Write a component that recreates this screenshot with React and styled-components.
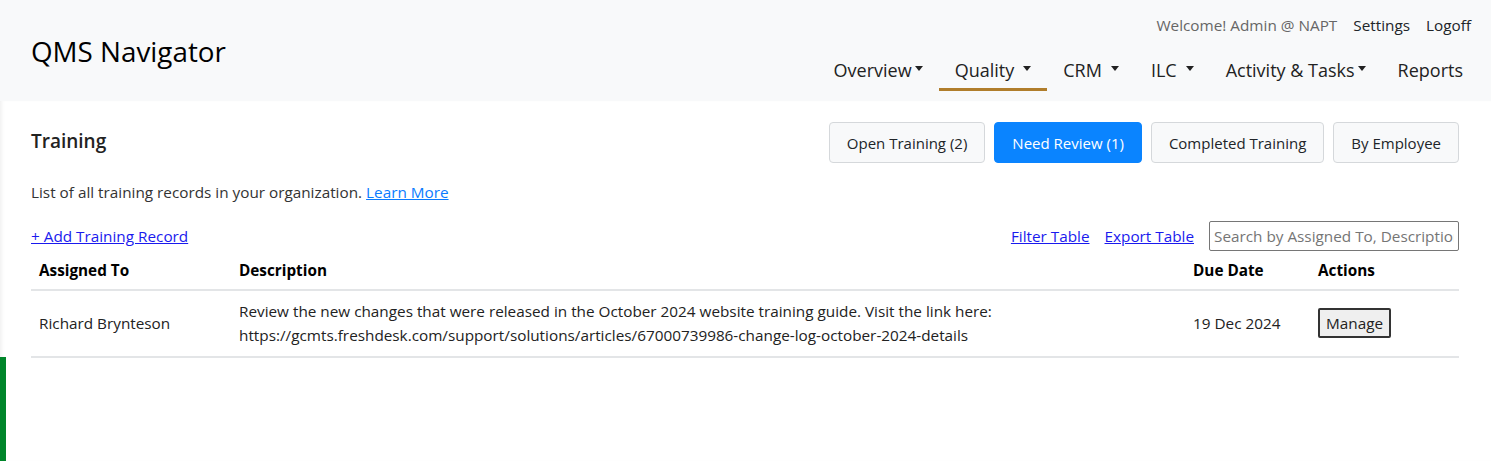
import React from 'react';
import styled, { createGlobalStyle } from 'styled-components';

const GlobalStyle = createGlobalStyle`
  body {
    margin: 0;
    font-family: 'Open Sans', 'Noto Sans', sans-serif;
    color: #212529;
    background: #fff;
  }
`;

const Header = styled.header`
  height: 101px;
  background: #f8f9fa;
  display: flex;
  justify-content: space-between;
  padding: 0 20px 0 31px;
  box-sizing: border-box;
`;

const Brand = styled.div`
  font-size: 27.8px;
  font-weight: 500;
  color: #000;
  align-self: center;
`;

const RightCol = styled.div`
  display: flex;
  flex-direction: column;
  align-items: flex-end;
`;

const TopLinks = styled.div`
  display: flex;
  gap: 16px;
  font-size: 15.3px;
  margin-top: 14px;
  line-height: 22px;
`;

const TopLink = styled.span`
  color: ${p => (p.muted ? '#666' : '#212529')};
`;

const Nav = styled.nav`
  display: flex;
  margin-top: 12px;
  margin-right: -8px;
`;

const NavItem = styled.div`
  display: flex;
  align-items: center;
  gap: ${p => (p.spaced ? '9px' : '3px')};
  padding: 3px 16px 0;
  height: 43px;
  font-size: 18px;
  color: #222;
  box-sizing: border-box;
  border-bottom: 3px solid ${p => (p.active ? '#b07d2b' : 'transparent')};
`;

const Caret = styled.span`
  width: 0;
  height: 0;
  border-left: 4.5px solid transparent;
  border-right: 4.5px solid transparent;
  border-top: 5px solid #222;
  margin-top: -2px;
`;

const Main = styled.main`
  padding: 0 32px 0 31px;
  min-height: 360px;
  box-shadow: inset 4px 0 4px -3px rgba(0, 0, 0, 0.08);
`;

const TitleRow = styled.div`
  display: flex;
  justify-content: space-between;
  align-items: center;
  padding-top: 21px;
`;

const Title = styled.h2`
  margin: 0 0 4px;
  font-size: 19px;
  font-weight: 600;
  color: #222;
`;

const TabGroup = styled.div`
  display: flex;
  gap: 9px;
`;

const Tab = styled.button`
  height: 41px;
  padding: 0 17px;
  font-family: inherit;
  font-size: 15px;
  border-radius: 4px;
  border: 1px solid ${p => (p.active ? '#0a84ff' : '#d5d8db')};
  background: ${p => (p.active ? '#0a84ff' : '#f8f9fa')};
  color: ${p => (p.active ? '#fff' : '#212529')};
`;

const Intro = styled.p`
  margin: 18px 0 0;
  font-size: 15.3px;
  line-height: 22px;
  color: #333;
`;

const LinkA = styled.a`
  color: ${p => p.color || '#1a1aee'};
  text-decoration: underline;
  cursor: pointer;
`;

const ToolRow = styled.div`
  display: flex;
  justify-content: space-between;
  align-items: center;
  margin-top: 18px;
  font-size: 15.3px;
`;

const Tools = styled.div`
  display: flex;
  align-items: center;
  gap: 15px;
`;

const Search = styled.input`
  width: 250px;
  height: 30px;
  box-sizing: border-box;
  border: 1px solid #767676;
  border-radius: 2px;
  padding: 0 4px;
  font-family: inherit;
  font-size: 15.3px;
  &::placeholder {
    color: #757575;
  }
`;

const Table = styled.table`
  width: 100%;
  border-collapse: collapse;
  margin-top: 1px;
  font-size: 15.3px;
`;

const Th = styled.th`
  text-align: left;
  font-weight: 700;
  color: #000;
  padding: 6px 8px 8px;
  height: 38px;
  box-sizing: border-box;
  border-bottom: 2px solid #e3e5e7;
  width: ${p => p.w || 'auto'};
`;

const Td = styled.td`
  padding: 8px 8px 9px;
  line-height: 24px;
  color: #222;
  border-bottom: 2px solid #e3e5e7;
  vertical-align: middle;
`;

const ManageBtn = styled.button`
  font-family: inherit;
  font-size: 15.3px;
  padding: 3px 6px;
  background: #efefef;
  border: 2px solid #333;
  border-radius: 2px;
  color: #222;
`;

const GreenTab = styled.div`
  position: fixed;
  left: 0;
  top: 357px;
  width: 6px;
  height: 104px;
  background: #00852a;
`;

const navItems = [
  { label: 'Overview', caret: true },
  { label: 'Quality', caret: true, spaced: true, active: true },
  { label: 'CRM', caret: true, spaced: true },
  { label: 'ILC', caret: true, spaced: true },
  { label: 'Activity & Tasks', caret: true },
  { label: 'Reports' },
];

const tabs = [
  { label: 'Open Training (2)' },
  { label: 'Need Review (1)', active: true },
  { label: 'Completed Training' },
  { label: 'By Employee' },
];

export default function App() {
  return (
    <>
      <GlobalStyle />
      <Header>
        <Brand>QMS Navigator</Brand>
        <RightCol>
          <TopLinks>
            <TopLink muted>Welcome! Admin @ NAPT</TopLink>
            <TopLink>Settings</TopLink>
            <TopLink>Logoff</TopLink>
          </TopLinks>
          <Nav>
            {navItems.map(item => (
              <NavItem key={item.label} active={item.active} spaced={item.spaced}>
                {item.label}
                {item.caret && <Caret />}
              </NavItem>
            ))}
          </Nav>
        </RightCol>
      </Header>
      <Main>
        <TitleRow>
          <Title>Training</Title>
          <TabGroup>
            {tabs.map(t => (
              <Tab key={t.label} active={t.active}>{t.label}</Tab>
            ))}
          </TabGroup>
        </TitleRow>
        <Intro>
          List of all training records in your organization.{' '}
          <LinkA color="#0a7bff">Learn More</LinkA>
        </Intro>
        <ToolRow>
          <LinkA>+ Add Training Record</LinkA>
          <Tools>
            <LinkA>Filter Table</LinkA>
            <LinkA>Export Table</LinkA>
            <Search placeholder="Search by Assigned To, Description" />
          </Tools>
        </ToolRow>
        <Table>
          <thead>
            <tr>
              <Th w="200px">Assigned To</Th>
              <Th>Description</Th>
              <Th w="125px">Due Date</Th>
              <Th w="149px">Actions</Th>
            </tr>
          </thead>
          <tbody>
            <tr>
              <Td>Richard Brynteson</Td>
              <Td>
                Review the new changes that were released in the October 2024 website training guide. Visit the link here:
                <br />
                https://gcmts.freshdesk.com/support/solutions/articles/67000739986-change-log-october-2024-details
              </Td>
              <Td>19 Dec 2024</Td>
              <Td>
                <ManageBtn>Manage</ManageBtn>
              </Td>
            </tr>
          </tbody>
        </Table>
      </Main>
      <GreenTab />
    </>
  );
}
